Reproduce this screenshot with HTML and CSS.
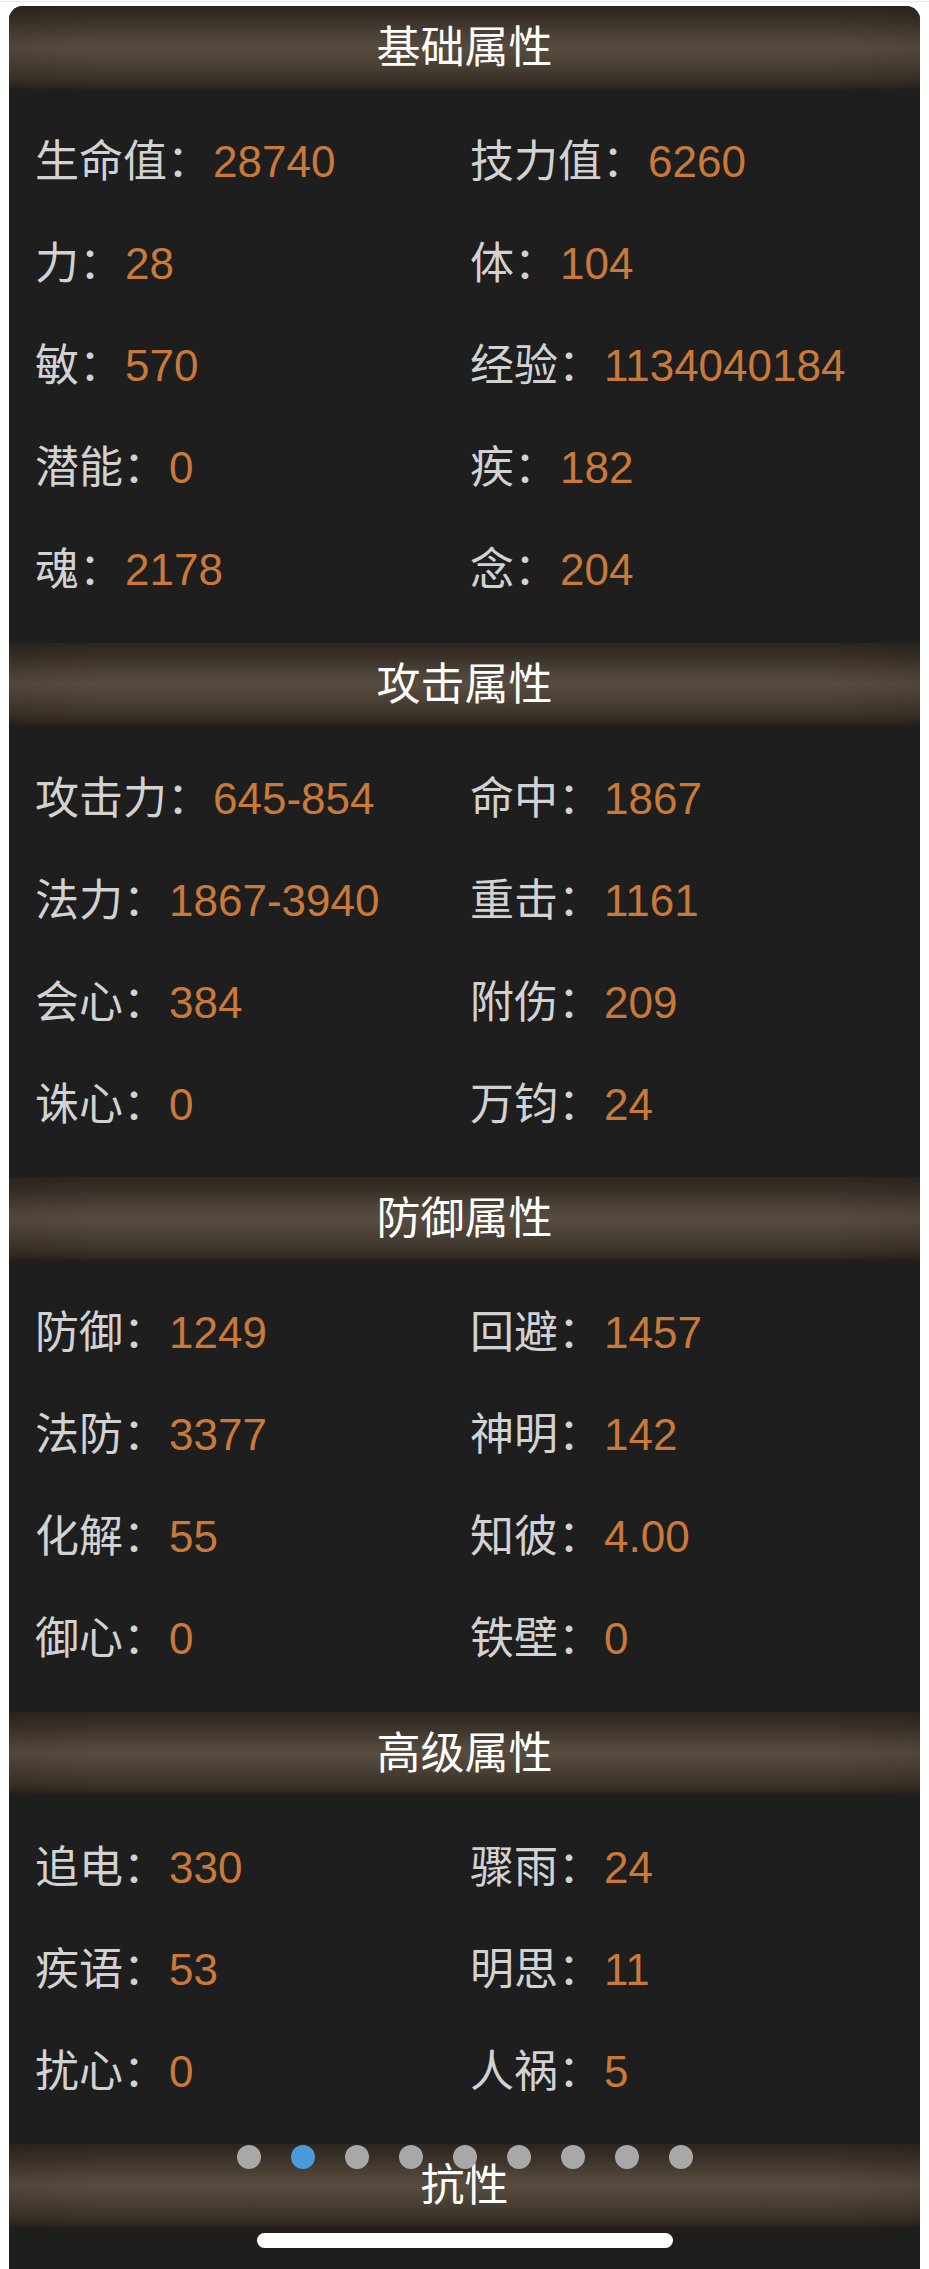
FILE: index.html
```html
<!DOCTYPE html>
<html lang="zh-CN">
<head>
    <meta charset="UTF-8">
    <meta name="viewport" content="width=device-width, initial-scale=1.0">
    <title>角色属性</title>
    <link rel="stylesheet" href="styles.css">
</head>
<body>
    <div class="page">
        <div class="panel">
            <!-- 基础属性 -->
            <div class="section-title">基础属性</div>
            <div class="stat-grid">
                <div class="stat"><span class="label">生命值：</span><span class="value">28740</span></div>
                <div class="stat"><span class="label">技力值：</span><span class="value">6260</span></div>
                <div class="stat"><span class="label">力：</span><span class="value">28</span></div>
                <div class="stat"><span class="label">体：</span><span class="value">104</span></div>
                <div class="stat"><span class="label">敏：</span><span class="value">570</span></div>
                <div class="stat"><span class="label">经验：</span><span class="value">1134040184</span></div>
                <div class="stat"><span class="label">潜能：</span><span class="value">0</span></div>
                <div class="stat"><span class="label">疾：</span><span class="value">182</span></div>
                <div class="stat"><span class="label">魂：</span><span class="value">2178</span></div>
                <div class="stat"><span class="label">念：</span><span class="value">204</span></div>
            </div>

            <!-- 攻击属性 -->
            <div class="section-title">攻击属性</div>
            <div class="stat-grid">
                <div class="stat"><span class="label">攻击力：</span><span class="value">645-854</span></div>
                <div class="stat"><span class="label">命中：</span><span class="value">1867</span></div>
                <div class="stat"><span class="label">法力：</span><span class="value">1867-3940</span></div>
                <div class="stat"><span class="label">重击：</span><span class="value">1161</span></div>
                <div class="stat"><span class="label">会心：</span><span class="value">384</span></div>
                <div class="stat"><span class="label">附伤：</span><span class="value">209</span></div>
                <div class="stat"><span class="label">诛心：</span><span class="value">0</span></div>
                <div class="stat"><span class="label">万钧：</span><span class="value">24</span></div>
            </div>

            <!-- 防御属性 -->
            <div class="section-title">防御属性</div>
            <div class="stat-grid">
                <div class="stat"><span class="label">防御：</span><span class="value">1249</span></div>
                <div class="stat"><span class="label">回避：</span><span class="value">1457</span></div>
                <div class="stat"><span class="label">法防：</span><span class="value">3377</span></div>
                <div class="stat"><span class="label">神明：</span><span class="value">142</span></div>
                <div class="stat"><span class="label">化解：</span><span class="value">55</span></div>
                <div class="stat"><span class="label">知彼：</span><span class="value">4.00</span></div>
                <div class="stat"><span class="label">御心：</span><span class="value">0</span></div>
                <div class="stat"><span class="label">铁壁：</span><span class="value">0</span></div>
            </div>

            <!-- 高级属性 -->
            <div class="section-title">高级属性</div>
            <div class="stat-grid">
                <div class="stat"><span class="label">追电：</span><span class="value">330</span></div>
                <div class="stat"><span class="label">骤雨：</span><span class="value">24</span></div>
                <div class="stat"><span class="label">疾语：</span><span class="value">53</span></div>
                <div class="stat"><span class="label">明思：</span><span class="value">11</span></div>
                <div class="stat"><span class="label">扰心：</span><span class="value">0</span></div>
                <div class="stat"><span class="label">人祸：</span><span class="value">5</span></div>
            </div>

            <!-- 抗性 -->
            <div class="section-title last">
                抗性
                <div class="pager">
                    <span class="dot"></span>
                    <span class="dot active"></span>
                    <span class="dot"></span>
                    <span class="dot"></span>
                    <span class="dot"></span>
                    <span class="dot"></span>
                    <span class="dot"></span>
                    <span class="dot"></span>
                    <span class="dot"></span>
                </div>
            </div>
            <div class="home-area">
                <div class="home-bar"></div>
            </div>
        </div>
    </div>
</body>
</html>
```

FILE: styles.css
```css
/* Basic styling */
body {
    margin: 0;
    background-color: #fff;
    font-family: "Liberation Sans", "Noto Sans CJK SC", sans-serif;
}
.page {
    margin-top: 1px;
    border-top: 1px solid #e6e6e6;
    padding: 4px 9px 0;
}
.panel {
    background-color: #1e1e1e;
    border-radius: 14px 14px 0 0;
    overflow: hidden;
}
/* Section header bar */
.section-title {
    position: relative;
    height: 83.5px;
    line-height: 83.5px;
    text-align: center;
    color: #fff;
    font-size: 44px;
    background:
        linear-gradient(to right, rgba(0, 0, 0, 0.08), rgba(0, 0, 0, 0) 10%, rgba(0, 0, 0, 0) 90%, rgba(0, 0, 0, 0.08)),
        linear-gradient(to bottom, #2c251f 0%, #3b3229 18%, #4f4438 38%, #574c3f 50%, #4d4236 66%, #3c3329 86%, #2f2720 96%, #241e19 100%);
}
/* Stats */
.stat-grid {
    display: grid;
    grid-template-columns: 435px 1fr;
    padding: 21.5px 0 21.5px 26px;
}
.stat {
    height: 102px;
    line-height: 102px;
    font-size: 44px;
    white-space: nowrap;
}
.label {
    color: #d2d2d2;
}
.value {
    margin-left: 2px;
    color: #c97a3b;
}
/* Page dots */
.pager {
    position: absolute;
    top: 1px;
    left: 0;
    right: 0;
    display: flex;
    justify-content: center;
    gap: 30px;
    line-height: 0;
}
.dot {
    width: 24px;
    height: 24px;
    border-radius: 50%;
    background-color: #a8a8a8;
}
.dot.active {
    background-color: #4a9bd9;
}
/* iOS home indicator */
.home-area {
    height: 44px;
    padding-top: 5px;
    box-sizing: border-box;
    display: flex;
    justify-content: center;
}
.home-bar {
    width: 416px;
    height: 15px;
    border-radius: 8px;
    background-color: #fff;
}
```
